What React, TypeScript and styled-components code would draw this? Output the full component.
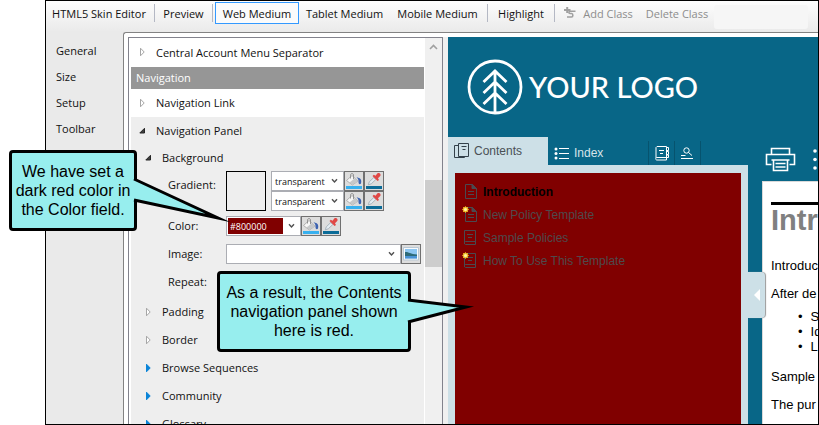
import React from "react";
import styled, { createGlobalStyle } from "styled-components";

const UI = '"Open Sans", "Noto Sans", sans-serif';
const ARIAL = '"Liberation Sans", Arial, sans-serif';

const Global = createGlobalStyle`
  *, *::before, *::after { box-sizing: border-box; }
  body { margin: 0; background: #fff; font-family: ${UI}; font-size: 11px; color: #111; }
  button, input, select { font: inherit; color: inherit; margin: 0; padding: 0; border: 0; background: none; border-radius: 0; }
  ul, p, h1 { margin: 0; padding: 0; list-style: none; }
  a { color: inherit; text-decoration: none; }
  svg { display: block; flex: none; }
`;

const Page = styled.div`
  position: relative;
  height: 100vh;
  padding-left: 45px;
  overflow: hidden;
`;

const Window = styled.main`
  height: 100%;
  border: 1px solid #000;
  display: flex;
  flex-direction: column;
  background: #eaeaea;
  overflow: hidden;
`;

/* ---------- toolbar ---------- */

const Toolbar = styled.header`
  flex: none;
  height: 31px;
  padding: 1px 10px 0 0;
  display: flex;
  align-items: flex-start;
  background: linear-gradient(#fdfdfd, #eaeaea);
  white-space: nowrap;
`;

const ToolButton = styled.button<{ $w: number; $active?: boolean }>`
  width: ${(p) => p.$w}px;
  height: 22px;
  flex: none;
  display: flex;
  align-items: center;
  justify-content: center;
  gap: 7px;
  border: 1px solid ${(p) => (p.$active ? "#3399ff" : "transparent")};
  background: ${(p) => (p.$active ? "#fbfbfb" : "transparent")};
  &:disabled { color: #8d8d8d; }
`;

const ToolSeparator = styled.span`
  flex: none;
  width: 1px;
  height: 18px;
  margin: 2px 2px 0;
  background: #b4b8c4;
`;

const ToolBlank = styled.span`
  flex: 0 1 94px;
  height: 24px;
  margin-top: 3px;
  border-radius: 3px;
  background: #f6f6f6;
`;

/* ---------- body ---------- */

const Body = styled.div`
  flex: 1;
  min-height: 0;
  display: flex;
`;

const SideNav = styled.nav`
  flex: none;
  width: 77px;
  padding: 6px 0 0 10px;
  display: flex;
  flex-direction: column;
`;

const SideLink = styled.a`
  line-height: 26px;
`;

const Panel = styled.section`
  flex: 1;
  min-width: 0;
  display: flex;
  padding: 4px 0 0 4px;
  border: solid #828282;
  border-width: 1px 0 0 1px;
  border-top-left-radius: 3px;
  background: #fff;
`;

const Tree = styled.div`
  flex: none;
  width: 315px;
  display: flex;
  padding-left: 2px;
  border: 1px solid #82828c;
  border-bottom: 0;
  overflow: hidden;
`;

const TreeContent = styled.div`
  flex: 1;
  min-width: 0;
  height: 0;
  margin-right: 1px;
`;

const Divider = styled.div`
  flex: none;
  width: 5px;
  background: #f0f0f0;
`;

const GroupTitle = styled.div`
  height: 22px;
  padding-left: 5px;
  line-height: 22px;
  color: #fff;
  background: #969696;
`;

const Shaded = styled.div`
  background: #eee;
`;

const TreeRow = styled.button<{ $sub?: boolean; $h?: number }>`
  width: 100%;
  height: ${(p) => p.$h ?? 28}px;
  padding: 0 0 1px ${(p) => (p.$sub ? 14 : 8)}px;
  display: flex;
  align-items: center;
  text-align: left;
  white-space: nowrap;
  svg { margin-right: 9px; }
`;

const Form = styled.div`
  display: flex;
  flex-direction: column;
  gap: 8px;
  padding: 0 3px 6px 37px;
`;

const Field = styled.div<{ $tight?: boolean }>`
  display: flex;
  min-height: 20px;
  margin-bottom: ${(p) => (p.$tight ? -3 : 0)}px;
`;

const FieldLabel = styled.label`
  flex: none;
  width: 58px;
  line-height: 20px;
`;

const LabelTall = styled(FieldLabel)`
  line-height: 27px;
`;

const Swatch = styled.button`
  flex: none;
  width: 40px;
  height: 40px;
  margin-right: 5px;
  border: 1px solid #000;
  background: #eee;
`;

const ComboStack = styled.div`
  display: flex;
  flex-direction: column;
`;

const FieldLine = styled.div`
  display: flex;
  flex: 1;
  height: 20px;
`;

const ComboBox = styled.div<{ $w?: number }>`
  flex: ${(p) => (p.$w ? "none" : "1")};
  width: ${(p) => (p.$w ? p.$w + "px" : "auto")};
  height: 20px;
  display: grid;
  grid-template-columns: minmax(0, 1fr) 18px;
  align-items: center;
  border: 1px solid #abadb3;
  background: #fff;
  font-size: 9px;
`;

const Select = styled.select`
  grid-area: 1 / 1 / 2 / 3;
  width: 100%;
  height: 18px;
  padding-left: 3px;
  appearance: none;
  outline: none;
`;

const ComboArrow = styled.svg`
  grid-area: 1 / 2 / 2 / 3;
  justify-self: center;
  pointer-events: none;
`;

const ColorInput = styled.input`
  width: 55px;
  height: 16px;
  margin-left: 1px;
  padding-left: 2px;
  background: #800000;
  color: #fff;
  outline: none;
`;

const IconButton = styled.button`
  flex: none;
  width: 20px;
  height: 20px;
  display: flex;
  align-items: center;
  justify-content: center;
  border: 1px solid #707070;
  background: #ddd;
`;

const Scrollbar = styled.div`
  flex: none;
  width: 17px;
  display: flex;
  flex-direction: column;
  background: #f0f0f0;
`;

const ScrollUp = styled.button`
  flex: none;
  height: 17px;
  display: flex;
  align-items: center;
  justify-content: center;
`;

const ScrollThumb = styled.div`
  flex: none;
  height: 87px;
  margin-top: 125px;
  background: #cdcdcd;
`;

/* ---------- preview ---------- */

const Preview = styled.section`
  flex: 1;
  min-width: 0;
  display: flex;
  flex-direction: column;
  background: #086687;
  font-family: ${ARIAL};
  font-size: 12px;
  overflow: hidden;
`;

const Brand = styled.div`
  flex: none;
  height: 100px;
  padding-left: 19px;
  display: flex;
  align-items: center;
  gap: 6px;
  color: #fff;
  font: 500 29px/32px Lato, sans-serif;
  white-space: nowrap;
`;

const PreviewBody = styled.div`
  flex: 1;
  min-height: 0;
  display: flex;
`;

const NavColumn = styled.div`
  flex: none;
  width: 300px;
  display: flex;
  flex-direction: column;
`;

const Tabs = styled.div`
  flex: none;
  height: 28px;
  display: flex;
  align-items: flex-end;
`;

const Tab = styled.button<{ $w: number; $active?: boolean; $edge?: boolean }>`
  width: ${(p) => p.$w}px;
  height: ${(p) => (p.$active ? 28 : 24)}px;
  display: flex;
  align-items: center;
  gap: 5px;
  padding-left: 6px;
  color: ${(p) => (p.$active ? "#4a5055" : "#d6e4ea")};
  background: ${(p) => (p.$active ? "#cde0e7" : "transparent")};
  border-right: ${(p) => (p.$edge ? "1px solid #06536e" : "0")};
`;

const NavFrame = styled.div`
  flex: 1;
  padding: 8px 7px 0;
  display: flex;
  background: #cde0e7;
`;

const Contents = styled.ul`
  flex: 1;
  padding: 7px 0 0 7px;
  background: #800000;
`;

const Topic = styled.a<{ $current?: boolean }>`
  height: 23px;
  display: flex;
  align-items: center;
  gap: 5px;
  color: ${(p) => (p.$current ? "#000" : "#4f4a4c")};
  font-weight: ${(p) => (p.$current ? 700 : 400)};
`;

const Gutter = styled.div`
  position: relative;
  flex: none;
  width: 14px;
`;

const Collapse = styled.button`
  position: absolute;
  left: 0;
  top: 135px;
  width: 17px;
  height: 46px;
  display: flex;
  align-items: center;
  justify-content: center;
  background: #cde0e7;
  border-radius: 0 4px 4px 0;
  box-shadow: 1px 0 1px #9a9a9a;
`;

const DocColumn = styled.div`
  flex: 1;
  min-width: 0;
  display: flex;
  flex-direction: column;
  overflow: hidden;
`;

const DocTools = styled.div`
  flex: none;
  height: 44px;
  padding-left: 3px;
  display: flex;
  align-items: center;
  gap: 17px;
`;

const DocButton = styled.button`
  flex: none;
`;

const Article = styled.article`
  flex: 1;
  padding: 20px 0 0 8px;
  border: solid #d9d9d9;
  border-width: 1px 0 0 1px;
  background: #fff;
  color: #000;
  font-size: 13px;
  line-height: 15px;
  white-space: nowrap;
  overflow: hidden;
`;

const Heading = styled.h1`
  border-top: 3px solid #000;
  margin-bottom: 23px;
  font-size: 29px;
  line-height: 30px;
  color: #808080;
`;

const Para = styled.p`
  margin-bottom: 13px;
`;

const Bullets = styled.ul`
  margin: -5px 0 15px 27px;
`;

const Bullet = styled.li`
  display: flex;
  gap: 8px;
`;

/* ---------- callouts ---------- */

const Callout = styled.aside<{ $x: number; $y: number; $w: number }>`
  position: absolute;
  left: ${(p) => p.$x}px;
  top: ${(p) => p.$y}px;
  width: ${(p) => p.$w}px;
  height: 81px;
  display: flex;
  align-items: center;
  justify-content: center;
  padding-bottom: 1px;
  border: 3px solid #000;
  border-radius: 4px;
  background: #97eeee;
  color: #000;
  font: 16px/19px ${ARIAL};
  text-align: center;
  white-space: nowrap;
`;

const Tail = styled.svg`
  position: absolute;
  left: 100%;
  top: 0;
  margin-left: -2px;
  overflow: visible;
`;

/* ---------- drawings ---------- */

const Closed = ({ blue }: { blue?: boolean }) => (
  <svg width="8" height="10" viewBox="0 0 8 10">
    <path d="M1.5 1.2 5.2 5 1.5 8.8Z" fill={blue ? "#0a84d8" : "#fff"} stroke={blue ? "#0a84d8" : "#a6a6a6"} />
  </svg>
);

const Opened = () => (
  <svg width="8" height="10" viewBox="0 0 8 10">
    <path d="M5.5 2.300v4.700H.8Z" fill="#404040" stroke="#262626" />
  </svg>
);

const Arrow = () => (
  <ComboArrow width="7" height="6" viewBox="0 0 7 6">
    <path d="M1 1.2 3.5 4 6 1.2" fill="none" stroke="#505050" strokeWidth="1.4" />
  </ComboArrow>
);

const Bucket = () => (
  <svg width="18" height="18" viewBox="0 0 18 18">
    <path d="M1.500 8.500 7 3.500l6 5.500-5.600 4Z" fill="#f6f6f6" stroke="#a2a2a2" strokeWidth=".8" />
    <path d="m4.5 10.500 5.600-4.400 2.900 2.900-5.600 4Z" fill="#c6c8ca" />
    <path d="M5.500 6.500V3.200C5.500 1 8.500 1 8.500 3v4" fill="none" stroke="#8a8a8a" strokeWidth=".9" />
    <path d="M11.500 5.500c3.500 0 5.600 2 4.500 6-1.400 1.600-2.600.3-2.500-1.800.1-2-.4-3.200-2-4.200Z" fill="#3c62b0" />
    <path d="M1 14h16v3H1z" fill="#38b0ee" />
  </svg>
);

const Dropper = () => (
  <svg width="18" height="18" viewBox="0 0 18 18">
    <path d="m3.300 12.800 1-3 4.500-4.300 2 2-4.500 4.300Z" fill="#e4ecf2" stroke="#9aa8b2" strokeWidth=".8" />
    <path d="m7.500 4 1.300-1.200 1.700 1L12.300 1.500c1.500-1.500 4.400.7 2.900 2.600L13 6.200l1 1.700L12.600 9Z" fill="#e04846" />
    <path d="M1 14h16v3H1z" fill="#0c6c98" />
  </svg>
);

const Picture = () => (
  <svg width="16" height="14" viewBox="0 0 16 14">
    <path d="M.5.500h15v12.500H.5z" fill="#f8fafc" stroke="#b9c8d4" />
    <path d="M2 2h12v9.500H2z" fill="#8cc6f2" />
    <path d="M2 5c3-.5 5 2 12 2.500v1.500H2z" fill="#2d6a78" />
    <path d="M2 9h12v2.500H2z" fill="#4a93d6" />
  </svg>
);

const ClassIcon = () => (
  <svg width="12" height="12" viewBox="0 0 12 12" fill="none" stroke="#a0a0a0" strokeWidth="1.600">
    <path d="M0 3h6.500M3.200 0v6" strokeWidth="2" />
    <path d="M11.500 4.200H6C4.500 4.200 4.500 6.500 6 6.500h1.500c1.800 0 1.800 3.500 0 3.500H3" />
  </svg>
);

const Logo = () => (
  <svg width="56" height="56" viewBox="0 0 56 56" fill="none" stroke="#fff" strokeWidth="2.800">
    <circle cx="28" cy="28" r="26" />
    <path d="M28 11v43M16.500 23 28 12l11.500 11M16.500 34 28 23l11.500 11M16.500 45 28 34l11.500 11" />
  </svg>
);

const BooksIcon = () => (
  <svg width="15" height="16" viewBox="0 0 15 16" fill="none" stroke="#33414a">
    <path d="M4.500.5h10v13h-10zM4.500 2.500h-4v12h10v-1M7.500 3.500h5M8.500 6.500h3" />
  </svg>
);

const ListIcon = () => (
  <svg width="15" height="13" viewBox="0 0 15 13" fill="#fff">
    <circle cx="2" cy="2" r="1.500" />
    <circle cx="2" cy="6.500" r="1.500" />
    <circle cx="2" cy="11" r="1.500" />
    <path d="M5 1h10v1H5zM5 6h10v1H5zM5 11h10v1H5z" />
  </svg>
);

const GlossaryIcon = () => (
  <svg width="15" height="15" viewBox="0 0 15 15" fill="none" stroke="#fff">
    <path d="M2 .5h9.500v13.500H2C0 14 .5 11.500 2 11.500h9.500M1 12V1.500L2 .5M4 4.500h5M5 7.500h3M11.500 1.500h2v3h-2M11.500 5.500h2v3h-2M11.500 9h2v2.500h-2" />
  </svg>
);

const SearchIcon = () => (
  <svg width="12" height="12" viewBox="0 0 12 12" fill="none" stroke="#fff">
    <circle cx="5.500" cy="3.500" r="2.700" />
    <path d="m7.500 5.500 3.500 3M0 8.500h4.500M0 11.500h12" />
  </svg>
);

const Star = () => (
  <g stroke="none">
    <path d="M3.500 0 4.400 1.300 6 1l-.3 1.600L7 3.500l-1.300.9L6 6l-1.600-.3L3.500 7l-.9-1.300L1 6l.3-1.600L0 3.500l1.300-.9L1 1l1.600.3Z" fill="#f7c52a" />
    <circle cx="3.500" cy="3.500" r="1.500" fill="#fdf3a8" />
  </g>
);

const PageIcon = ({ starred }: { starred?: boolean }) => (
  <svg width="16" height="17" viewBox="0 0 16 17" fill="none" stroke="#4a4a50">
    <path d="M3.500 1.500h7l4 4v10h-11zM6 8.500h6M6 11.500h6" />
    <path d="M10 1.500v4h4.500Z" fill="#4a4a50" />
    {starred && <Star />}
  </svg>
);

const BookIcon = ({ starred }: { starred?: boolean }) => (
  <svg width="16" height="17" viewBox="0 0 16 17" fill="none" stroke="#4a4a50">
    <path d="M2.500 13.500v-12h11v14h-10c-1.500 0-1.500-3 0-3h10M5 5.500h6M6 8.500h4" />
    {starred && <Star />}
  </svg>
);

const Printer = () => (
  <svg width="31" height="25" viewBox="0 0 31 25" fill="none" stroke="#fff" strokeWidth="1.600">
    <path d="M6.500 7V1.500h18V7M6.500 17.500H1.500V7.500h28v10h-5M6.500 13h18M8.500 13v10.500h14V13M10.500 16.500h10M10.500 20h10" />
  </svg>
);

const Dots = () => (
  <svg width="4" height="21" viewBox="0 0 4 21" fill="#fff">
    <circle cx="2" cy="2" r="1.800" />
    <circle cx="2" cy="10.500" r="1.800" />
    <circle cx="2" cy="19" r="1.800" />
  </svg>
);

const ColorButtons = () => (
  <>
    <IconButton aria-label="Fill color"><Bucket /></IconButton>
    <IconButton aria-label="Pick color"><Dropper /></IconButton>
  </>
);

const GradientLine = ({ label }: { label: string }) => (
  <FieldLine>
    <ComboBox $w={73}>
      <Select aria-label={label}><option>transparent</option></Select>
      <Arrow />
    </ComboBox>
    <ColorButtons />
  </FieldLine>
);

export default function App() {
  return (
    <Page>
      <Global />
      <Window>
        <Toolbar>
          <ToolButton $w={106}>HTML5 Skin Editor</ToolButton>
          <ToolSeparator />
          <ToolButton $w={53}>Preview</ToolButton>
          <ToolSeparator />
          <ToolButton $w={84} $active>Web Medium</ToolButton>
          <ToolButton $w={91}>Tablet Medium</ToolButton>
          <ToolButton $w={95}>Mobile Medium</ToolButton>
          <ToolSeparator />
          <ToolButton $w={62}>Highlight</ToolButton>
          <ToolSeparator />
          <ToolButton $w={83} disabled><ClassIcon />Add Class</ToolButton>
          <ToolButton $w={74} disabled>Delete Class</ToolButton>
          <ToolBlank />
        </Toolbar>
        <Body>
          <SideNav>
            {["General", "Size", "Setup", "Toolbar"].map((t) => (
              <SideLink href="#" key={t}>{t}</SideLink>
            ))}
          </SideNav>
          <Panel>
            <Tree>
              <TreeContent>
                <TreeRow $h={29}><Closed />Central Account Menu Separator</TreeRow>
                <GroupTitle>Navigation</GroupTitle>
                <TreeRow><Closed />Navigation Link</TreeRow>
                <Shaded>
                  <TreeRow><Opened />Navigation Panel</TreeRow>
                  <TreeRow $sub $h={26}><Opened />Background</TreeRow>
                  <Form>
                    <Field $tight>
                      <LabelTall htmlFor="gradient">Gradient:</LabelTall>
                      <Swatch id="gradient" />
                      <ComboStack>
                        <GradientLine label="Gradient start" />
                        <GradientLine label="Gradient end" />
                      </ComboStack>
                    </Field>
                    <Field>
                      <FieldLabel htmlFor="color">Color:</FieldLabel>
                      <ComboBox $w={75}>
                        <ColorInput id="color" defaultValue="#800000" />
                        <Arrow />
                      </ComboBox>
                      <ColorButtons />
                    </Field>
                    <Field>
                      <FieldLabel htmlFor="image">Image:</FieldLabel>
                      <ComboBox>
                        <Select id="image"><option /></Select>
                        <Arrow />
                      </ComboBox>
                      <IconButton aria-label="Browse image"><Picture /></IconButton>
                    </Field>
                    <Field>
                      <FieldLabel htmlFor="repeat">Repeat:</FieldLabel>
                      <ComboBox $w={150}>
                        <Select id="repeat"><option /></Select>
                        <Arrow />
                      </ComboBox>
                    </Field>
                  </Form>
                  <TreeRow $sub><Closed />Padding</TreeRow>
                  <TreeRow $sub><Closed />Border</TreeRow>
                  <TreeRow $sub><Closed blue />Browse Sequences</TreeRow>
                  <TreeRow $sub><Closed blue />Community</TreeRow>
                  <TreeRow $sub><Closed blue />Glossary</TreeRow>
                </Shaded>
              </TreeContent>
              <Scrollbar>
                <ScrollUp aria-label="Scroll up">
                  <svg width="9" height="6" viewBox="0 0 9 6"><path d="M1 5 4.500 1.500 8 5" fill="none" stroke="#a0a0a0" strokeWidth="1.600" /></svg>
                </ScrollUp>
                <ScrollThumb />
              </Scrollbar>
            </Tree>
            <Divider />
            <Preview>
              <Brand><Logo />YOUR LOGO</Brand>
              <PreviewBody>
                <NavColumn>
                  <Tabs>
                    <Tab $w={100} $active><BooksIcon />Contents</Tab>
                    <Tab $w={101} $edge><ListIcon />Index</Tab>
                    <Tab $w={26} $edge aria-label="Glossary"><GlossaryIcon /></Tab>
                    <Tab $w={26} $edge aria-label="Search"><SearchIcon /></Tab>
                  </Tabs>
                  <NavFrame>
                    <Contents>
                      <li><Topic href="#" $current><PageIcon />Introduction</Topic></li>
                      <li><Topic href="#"><PageIcon starred />New Policy Template</Topic></li>
                      <li><Topic href="#"><BookIcon />Sample Policies</Topic></li>
                      <li><Topic href="#"><BookIcon starred />How To Use This Template</Topic></li>
                    </Contents>
                  </NavFrame>
                </NavColumn>
                <Gutter>
                  <Collapse aria-label="Collapse navigation">
                    <svg width="6" height="12" viewBox="0 0 6 12"><path d="M6 0v12L0 6Z" fill="#fff" /></svg>
                  </Collapse>
                </Gutter>
                <DocColumn>
                  <DocTools>
                    <DocButton aria-label="Print"><Printer /></DocButton>
                    <DocButton aria-label="More"><Dots /></DocButton>
                  </DocTools>
                  <Article>
                    <Heading>Intr</Heading>
                    <Para>Introduc</Para>
                    <Para>After de</Para>
                    <Bullets>
                      {["S", "Id", "L"].map((t) => <Bullet key={t}><span>•</span>{t}</Bullet>)}
                    </Bullets>
                    <Para>Sample</Para>
                    <Para>The pur</Para>
                  </Article>
                </DocColumn>
              </PreviewBody>
            </Preview>
          </Panel>
        </Body>
      </Window>
      <Callout $x={9} $y={150} $w={128}>
        We have set a<br />dark red color in<br />the Color field.
        <Tail width="100" height="75" viewBox="0 0 100 75">
          <path d="M0 25 86 65 0 47Z" fill="#97eeee" />
          <path d="M2 26 86 65 2 47" fill="none" stroke="#000" strokeWidth="3" strokeMiterlimit="20" />
        </Tail>
      </Callout>
      <Callout $x={217} $y={271} $w={194}>
        As a result, the Contents<br />navigation panel shown<br />here is red.
        <Tail width="70" height="60" viewBox="0 0 70 60">
          <path d="M0 26 60 33 0 48Z" fill="#97eeee" />
          <path d="M2 26 60 33 2 48" fill="none" stroke="#000" strokeWidth="3" strokeMiterlimit="20" />
        </Tail>
      </Callout>
    </Page>
  );
}
